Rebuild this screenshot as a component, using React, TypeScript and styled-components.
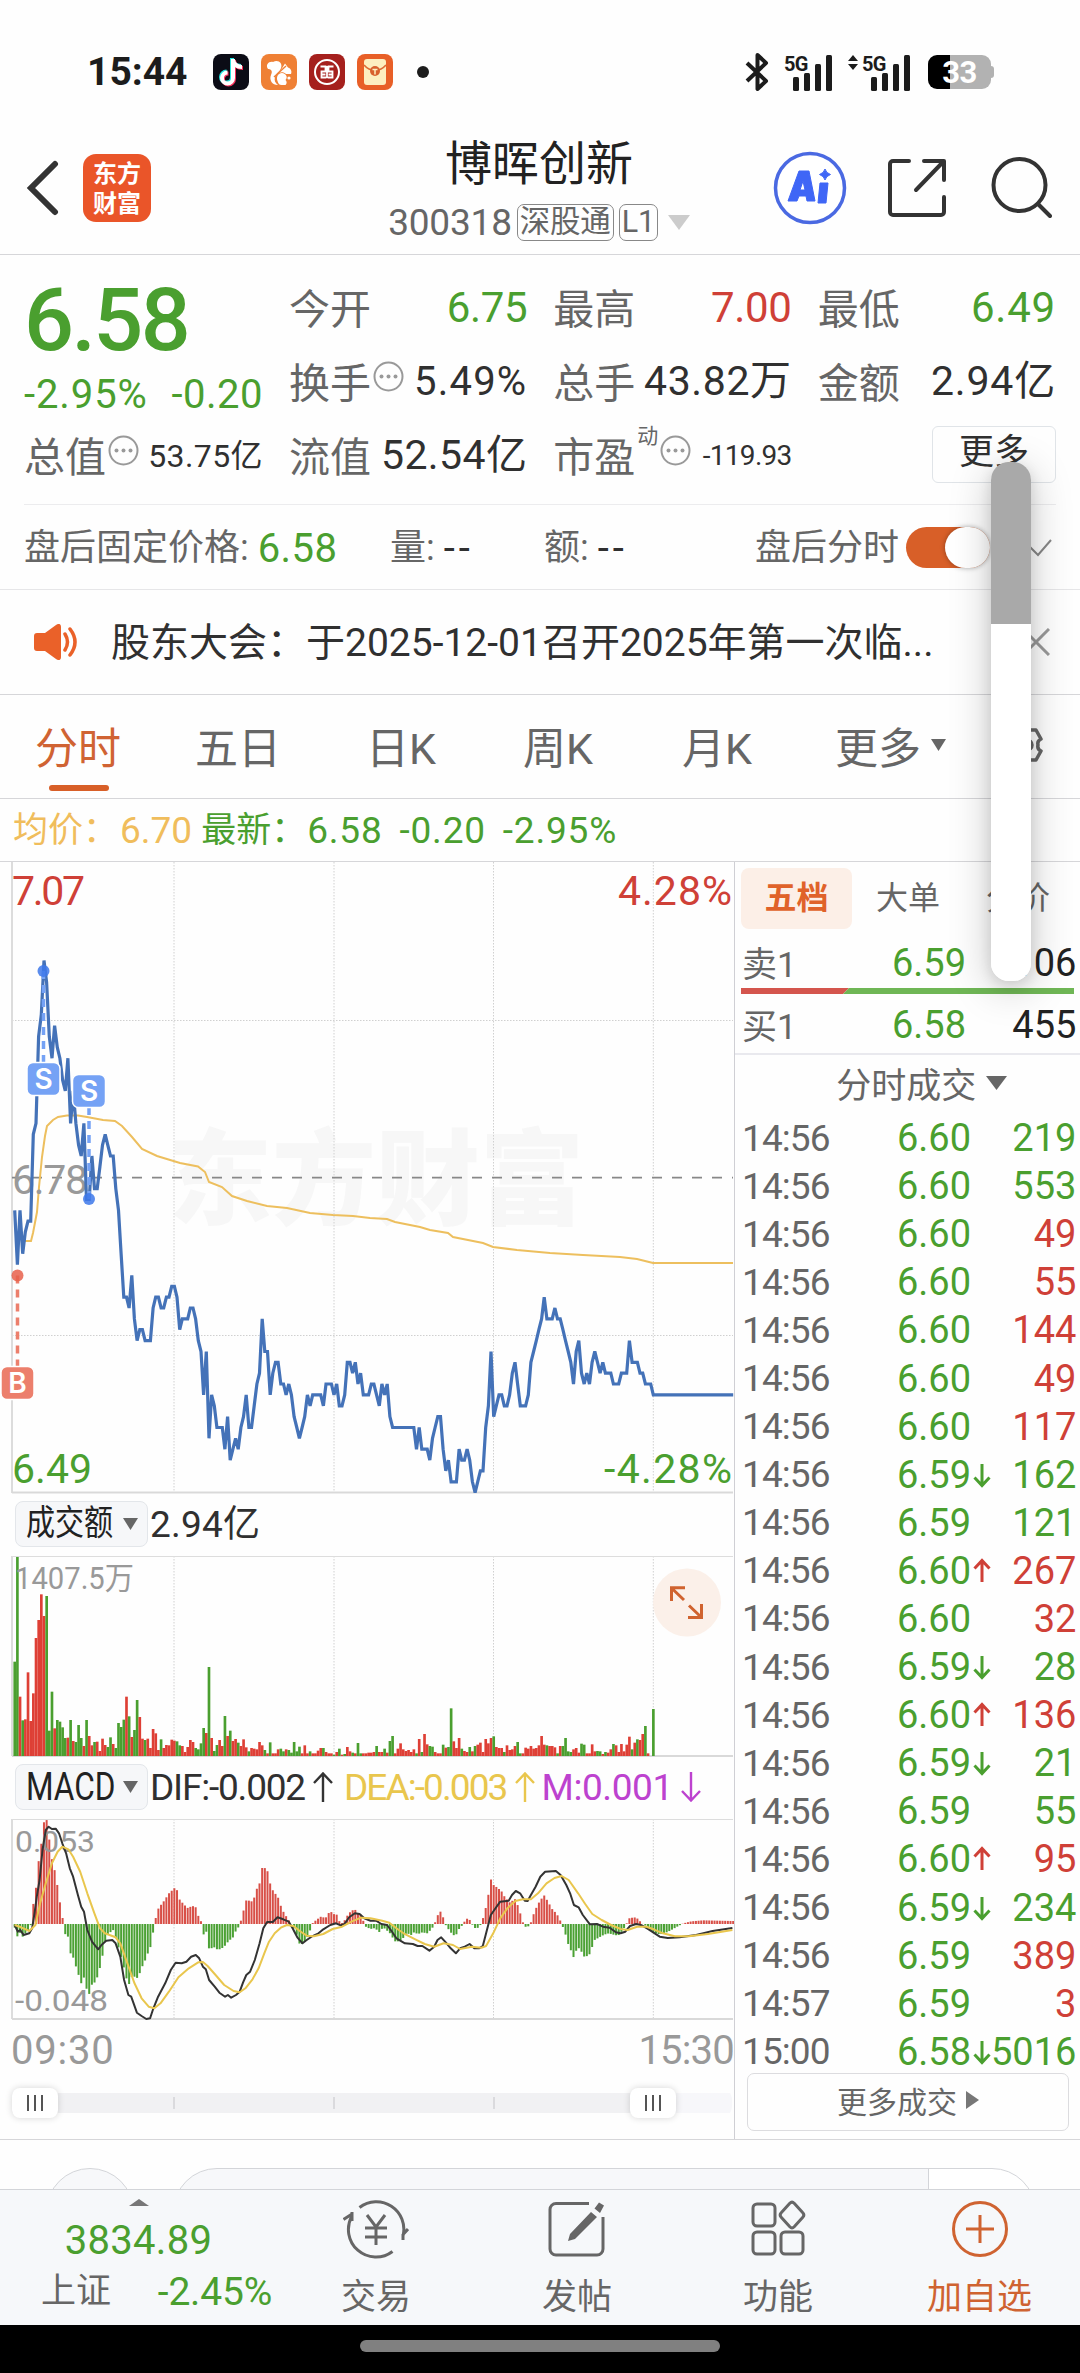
import React from 'react';
import styled, { createGlobalStyle } from 'styled-components';

const C = {
  green: '#4a9f2f',
  red: '#cf4037',
  orange: '#d85f28',
  gray: '#666',
  dark: '#303030',
  light: '#999',
  line: '#d6d6d9',
};
const FONT = `Roboto, "Noto Sans CJK SC", sans-serif`;

const Global = createGlobalStyle`
  * { box-sizing: border-box; }
  body { margin: 0; background: #fff; font-family: ${FONT}; color: ${C.dark}; }
  svg { display: block; flex: none; }
`;

const Screen = styled.div`
  position: relative;
  width: 1080px;
  height: 2373px;
  overflow: hidden;
  background: #fefefe;
  display: flex;
  flex-direction: column;
  white-space: nowrap;
`;

const Text = styled.span<{ $size: number; $color?: string; $ls?: number; $weight?: number }>`
  font-size: ${p => p.$size}px;
  line-height: 1.2;
  color: ${p => p.$color ?? C.dark};
  letter-spacing: ${p => p.$ls ?? 0}px;
  font-weight: ${p => p.$weight ?? 400};
`;

/* ---------- status bar ---------- */
const StatusBar = styled.div`
  height: 122px;
  padding: 22px 86px 0 87px;
  display: flex;
  align-items: center;
  justify-content: space-between;
`;
const StatusLeft = styled.div`
  display: flex;
  align-items: center;
  gap: 12px;
`;
const Clock = styled(Text)`
  width: 114px;
`;
const StatusRight = styled.div`
  display: flex;
  align-items: center;
`;
const Dot = styled.i`
  width: 12px;
  height: 12px;
  border-radius: 50%;
  background: #1c1c1c;
  margin-left: 12px;
`;
const Battery = styled.div`
  width: 63px;
  height: 34px;
  border-radius: 9px;
  background: linear-gradient(90deg, #000 35%, #b2b2b2 35%);
  color: #fff;
  font: 700 31px/35px ${FONT};
  letter-spacing: -0.5px;
  text-align: center;
  margin-left: 17px;
`;
const Nub = styled.i`
  width: 3px;
  height: 12px;
  background: #b2b2b2;
  border-radius: 0 3px 3px 0;
`;
const SignalBox = styled.div`
  display: flex;
  align-items: flex-start;
  height: 38px;
  margin-left: 15px;
`;
const NetType = styled.span`
  width: 24px;
  font-size: 20px;
  font-weight: 700;
  line-height: 22px;
  letter-spacing: -0.8px;
  color: #1c1c1c;
`;
const Bars = styled.svg`
  margin-left: -15px;
`;

const Signal = ({ arrows }: { arrows?: boolean }) => (
  <SignalBox>
    {arrows && <svg width="14" height="20" viewBox="0 0 14 20"><path d="M5 2l5 6H0zM5 17l5-6H0z" fill="#1c1c1c" /></svg>}
    <NetType>5G</NetType>
    <Bars width="40" height="38" viewBox="0 0 40 38" fill="#1c1c1c">
      <rect x="0" y="24" width="6" height="14" rx="1.500" />
      <rect x="11" y="20" width="6" height="18" rx="1.500" />
      <rect x="22" y="11" width="6" height="27" rx="1.500" />
      <rect x="33" y="2" width="6" height="36" rx="1.500" />
    </Bars>
  </SignalBox>
);

const Status = () => (
  <StatusBar>
    <StatusLeft>
      <Clock $size={39} $weight={700} $color="#1c1c1c">15:44</Clock>
      <svg width="36" height="36" viewBox="0 0 36 36">
        <rect width="36" height="36" rx="8" fill="#0b0c16" />
        <g fill="none" strokeWidth="4">
          <path d="M20 5v19a5.500 5.500 0 1 1-5.500-5.500M20 6c1 5 5 7 9 7" stroke="#25e6e0" transform="translate(-1 -1)" />
          <path d="M20 5v19a5.500 5.500 0 1 1-5.500-5.500M20 6c1 5 5 7 9 7" stroke="#f6305a" transform="translate(1 1)" />
          <path d="M20 5v19a5.500 5.500 0 1 1-5.500-5.500M20 6c1 5 5 7 9 7" stroke="#fff" />
        </g>
      </svg>
      <svg width="36" height="36" viewBox="0 0 36 36">
        <rect width="36" height="36" rx="8" fill="#ef8035" />
        <path d="M7 15c-3-4 1-8 5-7c5-3 10 1 8 6c-1 4-5 5-6 9c-1 3 0 6 3 8c-6 0-9-5-7-10c2-4 0-6-3-6z" fill="#fff" />
        <path d="M21 19c-4 0-6 4-4.500 8c1 3 2 4 4 4h4c2-2 1-4 0-5c3-3 0-7-3.500-7z" fill="#fff" />
        <path d="M18 19L24 9.500l3 4c3 1 4 4 3 6.500h-5c-2-2-5-2-7-1z" fill="#fff" />
        <path d="M13 23L25 12" stroke="#ef8035" strokeWidth="1.400" />
        <circle cx="28" cy="24" r="1.600" fill="#fff" />
      </svg>
      <svg width="36" height="36" viewBox="0 0 36 36">
        <rect width="36" height="36" rx="8" fill="#a5201d" />
        <circle cx="18" cy="18" r="12" fill="none" stroke="#fff" strokeWidth="2" />
        <path d="M11.500 12.500h5v5h-4v6h5M24.500 12.500h-5v5h4v6h-5M12 20.500h4.500M24 20.500h-4.500M18 12v12" fill="none" stroke="#fff" strokeWidth="1.800" />
      </svg>
      <svg width="36" height="36" viewBox="0 0 36 36">
        <rect width="36" height="36" rx="8" fill="#e85f27" />
        <rect x="7" y="5" width="22" height="26" rx="3" fill="#fdeec0" />
        <path d="M7 11c6 7 16 7 22 0" fill="none" stroke="#dd6a35" strokeWidth="1.600" />
        <circle cx="18" cy="17" r="5" fill="#d8602d" />
        <path d="M15.500 15.500h5M18 15.500v5" stroke="#fdeec0" strokeWidth="1.500" />
      </svg>
      <Dot />
    </StatusLeft>
    <StatusRight>
      <svg width="24" height="38" viewBox="0 0 24 38" fill="none" stroke="#1c1c1c" strokeWidth="4" strokeLinejoin="round">
        <path d="M2 10l19 18-8.500 8V2l8.500 8L2 28" />
      </svg>
      <Signal />
      <Signal arrows />
      <Battery>33</Battery>
      <Nub />
    </StatusRight>
  </StatusBar>
);

/* ---------- header ---------- */
const HeaderBar = styled.header`
  height: 133px;
  padding: 0 28px 0 26px;
  display: grid;
  grid-template-columns: 1fr auto 1fr;
  border-bottom: 1px solid ${C.line};
`;
const HeaderLeft = styled.div`
  display: flex;
  align-items: center;
  gap: 24px;
`;
const Logo = styled.div`
  width: 68px;
  height: 68px;
  border-radius: 13px;
  background: #ea5529;
  color: #fff;
  font: 700 24px/30px "Noto Sans CJK SC", sans-serif;
  display: flex;
  flex-direction: column;
  align-items: center;
  padding-top: 3px;
`;
const LogoLine = styled.span`
  height: 30px;
`;
const TitleBlock = styled.div`
  display: flex;
  flex-direction: column;
  align-items: center;
  padding-top: 10px;
`;
const Title = styled.div`
  font-size: 47px;
  line-height: 63px;
  color: #222;
`;
const SubTitle = styled.div`
  display: flex;
  align-items: center;
  height: 54px;
  font-size: 37px;
  letter-spacing: -0.2px;
  color: ${C.gray};
`;
const Tag = styled.span`
  height: 37px;
  border: 1.5px solid #888;
  border-radius: 7px;
  font-size: 30.5px;
  line-height: 34px;
  padding: 0 2px;
  margin-left: 5px;
`;
const HeaderRight = styled.div`
  display: flex;
  align-items: center;
  justify-content: flex-end;
`;

const Header = () => (
  <HeaderBar>
    <HeaderLeft>
      <svg width="33" height="56" viewBox="0 0 33 56" fill="none" stroke="#333" strokeWidth="6" strokeLinecap="round">
        <path d="M29 4L5 28L29 52" />
      </svg>
      <Logo><LogoLine>东方</LogoLine><LogoLine>财富</LogoLine></Logo>
    </HeaderLeft>
    <TitleBlock>
      <Title>博晖创新</Title>
      <SubTitle>
        300318<Tag>深股通</Tag><Tag>L1</Tag>
        <svg width="32" height="15" viewBox="0 0 32 15"><path d="M10 0h22L21 15z" fill="#ccc" /></svg>
      </SubTitle>
    </TitleBlock>
    <HeaderRight>
      <svg width="74" height="74" viewBox="0 0 74 74">
        <circle cx="37" cy="37" r="34.500" fill="#fff" stroke="#4a69e2" strokeWidth="3.500" />
        <path fillRule="evenodd" d="M26 20h10l6 30h-8l-1-5h-7l-2 5h-9zM30 30l-3 9h5z" fill="#3f66f6" stroke="#3f66f6" strokeLinejoin="round" />
        <path d="M47 32h8l-2 20h-8zM52 18q1 4 5.500 5.500q-4.500 1.500-5.500 5.500q-1-4-5.500-5.500q4.500-1.500 5.500-5.500z" fill="#3f66f6" stroke="#3f66f6" strokeLinejoin="round" />
      </svg>
      <svg width="62" height="62" viewBox="0 0 62 62" fill="none" stroke="#333" strokeWidth="4" strokeLinecap="round" strokeLinejoin="round" style={{ marginLeft: 39 }}>
        <path d="M23 4H7a3 3 0 0 0-3 3v48a3 3 0 0 0 3 3h48a3 3 0 0 0 3-3V40M38 4h20v19M57 5L30 33" />
      </svg>
      <svg width="62" height="62" viewBox="0 0 62 62" fill="none" stroke="#333" strokeWidth="4" strokeLinecap="round" style={{ marginLeft: 42 }}>
        <circle cx="29.500" cy="28" r="26" />
        <path d="M48 47l12 12" />
      </svg>
    </HeaderRight>
  </HeaderBar>
);

/* ---------- quote ---------- */
const Quote = styled.section`
  padding: 16px 24px 0;
  height: 335px;
  border-bottom: 1px solid #e6e6e8;
`;
const QuoteTop = styled.div`
  display: grid;
  grid-template-columns: 239px 1fr;
  column-gap: 26px;
  height: 234px;
  border-bottom: 1px solid #ececee;
`;
const BigPrice = styled.div`
  height: 95px;
  font-size: 88px;
  line-height: 97px;
  font-weight: 500;
  color: ${C.green};
  letter-spacing: -2.6px;
`;
const Change = styled.div`
  height: 53px;
  padding-top: 4px;
  display: flex;
  align-items: center;
  justify-content: space-between;
`;
const StatGrid = styled.div`
  display: grid;
  grid-template-columns: repeat(3, 1fr);
  grid-auto-rows: 74px;
  column-gap: 26px;
`;
const Stat = styled.div`
  height: 74px;
  display: flex;
  align-items: center;
  justify-content: space-between;
`;
const StatLabel = styled.div`
  display: flex;
  align-items: center;
  font-size: 41px;
  color: ${C.gray};
  gap: 2px;
  padding-bottom: 5px;
`;
const Sup = styled.span`
  font-size: 21px;
  align-self: flex-start;
  margin: -5px 0 0 0;
`;
const MoreBtn = styled.div`
  width: 124px;
  height: 57px;
  margin: 7px 0 0 auto;
  border: 1.5px solid #e0e4e8;
  border-radius: 6px;
  font-size: 35px;
  line-height: 52px;
  text-align: center;
`;
const AfterRow = styled.div`
  display: flex;
  align-items: center;
  height: 85px;
`;
const AfterItem = styled.div<{ $w?: number }>`
  width: ${p => (p.$w ? p.$w + 'px' : 'auto')};
  display: flex;
  align-items: center;
  gap: 9px;
  padding-top: 3px;
`;
const Switch = styled.div`
  width: 84px;
  height: 41px;
  margin-left: 7px;
  border-radius: 21px;
  background: ${C.orange};
  display: flex;
  justify-content: flex-end;
`;
const Knob = styled.i`
  width: 45px;
  height: 41px;
  border-radius: 21px;
  background: #fff;
  box-shadow: 0 0 5px rgba(0, 0, 0, 0.35);
`;

const Info = () => (
  <svg width="31" height="31" viewBox="0 0 31 31" style={{ marginTop: -6 }}>
    <circle cx="15.500" cy="15.500" r="14" fill="none" stroke="#999" strokeWidth="2" />
    {[8.5, 15.5, 22.5].map(x => <circle key={x} cx={x} cy="15.500" r="2" fill="#999" />)}
  </svg>
);

const QuotePanel = () => (
  <Quote>
    <QuoteTop>
      <div>
        <BigPrice>6.58</BigPrice>
        <Change>
          <Text $size={40} $ls={0.9} $color={C.green}>-2.95%</Text>
          <Text $size={40} $ls={0.5} $color={C.green}>-0.20</Text>
        </Change>
        <Stat><StatLabel>总值<Info /></StatLabel><Text $size={32} $ls={0.4}>53.75亿</Text></Stat>
      </div>
      <StatGrid>
        <Stat><StatLabel>今开</StatLabel><Text $size={42} $ls={-0.3} $color={C.green}>6.75</Text></Stat>
        <Stat><StatLabel>最高</StatLabel><Text $size={42} $ls={-0.3} $color={C.red}>7.00</Text></Stat>
        <Stat><StatLabel>最低</StatLabel><Text $size={42} $ls={0.8} $color={C.green}>6.49</Text></Stat>
        <Stat><StatLabel>换手<Info /></StatLabel><Text $size={40} $ls={1.2}>5.49%</Text></Stat>
        <Stat><StatLabel>总手</StatLabel><Text $size={41} $ls={0.6}>43.82万</Text></Stat>
        <Stat><StatLabel>金额</StatLabel><Text $size={41} $ls={0.8}>2.94亿</Text></Stat>
        <Stat><StatLabel>流值</StatLabel><Text $size={41} $ls={0.4}>52.54亿</Text></Stat>
        <Stat><StatLabel>市盈<Sup>动</Sup><Info /></StatLabel><Text $size={28} $ls={-0.7}>-119.93</Text></Stat>
        <MoreBtn>更多</MoreBtn>
      </StatGrid>
    </QuoteTop>
    <AfterRow>
      <AfterItem $w={366}><Text $size={36} $color={C.gray}>盘后固定价格:</Text><Text $size={40} $ls={0.4} $color={C.green}>6.58</Text></AfterItem>
      <AfterItem $w={154}><Text $size={36} $color={C.gray}>量:</Text><Text $size={40} $ls={4}>--</Text></AfterItem>
      <AfterItem $w={211}><Text $size={36} $color={C.gray}>额:</Text><Text $size={40} $ls={4}>--</Text></AfterItem>
      <AfterItem><Text $size={36} $color={C.gray}>盘后分时</Text></AfterItem>
      <Switch><Knob /></Switch>
      <svg width="26" height="18" viewBox="0 0 26 18" fill="none" stroke="#888" strokeWidth="2" style={{ marginLeft: 37 }}>
        <path d="M1 6l10 10L24 1" />
      </svg>
    </AfterRow>
  </Quote>
);

/* ---------- notice + tabs ---------- */
const Notice = styled.div`
  height: 105px;
  padding: 0 30px 0 34px;
  display: flex;
  align-items: center;
  border-bottom: 1px solid ${C.line};
`;
const NoticeText = styled.div`
  flex: 1;
  margin-left: 32px;
  padding-bottom: 6px;
  font-size: 39px;
`;
const Tabs = styled.nav`
  height: 104px;
  padding-left: 35px;
  display: grid;
  grid-template-columns: 160px 171px 157px 159px 153px 168px 1fr;
  border-bottom: 1px solid ${C.line};
`;
const Tab = styled.div<{ $on?: boolean }>`
  position: relative;
  display: flex;
  align-items: center;
  gap: 10px;
  padding-bottom: 4px;
  font-size: 43px;
  color: ${p => (p.$on ? '#d06333' : C.gray)};
  ${p => p.$on && `&::after { content: ''; position: absolute; left: 14px; bottom: 7px; width: 60px; height: 6px; border-radius: 3px; background: ${C.orange}; }`}
`;
const Summary = styled.div`
  height: 63px;
  padding: 2px 0 0 13px;
  display: flex;
  align-items: center;
  border-bottom: 1px solid ${C.line};
`;

const Strip = () => (
  <>
    <Notice>
      <svg width="45" height="36" viewBox="0 0 45 36">
        <path d="M3 9h8l11-8c3-2 5-1 5 2v30c0 3-2 4-5 2l-11-8H3c-2 0-3-1-3-3V12c0-2 1-3 3-3z" fill="#ea6129" />
        <path d="M31 10q5 8 0 16M36 5q10 13 0 26" fill="none" stroke="#ea6129" strokeWidth="3.500" strokeLinecap="round" />
      </svg>
      <NoticeText>股东大会：于2025-12-01召开2025年第一次临...</NoticeText>
      <svg width="28" height="28" viewBox="0 0 28 28" stroke="#999" strokeWidth="3"><path d="M1 1l26 26M27 1L1 27" /></svg>
    </Notice>
    <Tabs>
      <Tab $on>分时</Tab>
      <Tab>五日</Tab>
      <Tab>日K</Tab>
      <Tab>周K</Tab>
      <Tab>月K</Tab>
      <Tab>更多<svg width="15" height="12" viewBox="0 0 15 12"><path d="M0 0h15L7.500 12z" fill="#666" /></svg></Tab>
      <Tab>
        <svg width="42" height="42" viewBox="0 0 42 42" fill="none" stroke="#666" strokeWidth="3.500" strokeLinejoin="round">
          <path d="M18 6q3 3 6 0h6l5 9q-4 2-3 6q-1 4 3 6l-5 9h-6q-3-3-6 0h-6l-5-9q4-2 3-6q1-4-3-6l5-9z" transform="translate(3 0)" />
          <circle cx="24" cy="21" r="5" />
        </svg>
      </Tab>
    </Tabs>
    <Summary>
      <Text $size={35} $color="#f0bd5c">均价：</Text>
      <Text $size={37} $color="#f0bd5c" style={{ marginLeft: 2, marginRight: 9 }}>6.70</Text>
      <Text $size={35} $color={C.green}>最新：</Text>
      <Text $size={37} $color={C.green} $ls={0.8} style={{ wordSpacing: 7, marginLeft: 1 }}>6.58 -0.20 -2.95%</Text>
    </Summary>
  </>
);

/* ---------- chart data ---------- */
const STEP = 2.661;
const X0 = 14.7;
const xAt = (minute: number) => X0 + minute * STEP;

/* [minute, price in cents] */
const PRICE: number[][] = [
  [0,675],[1,670],[2,675],[3,671],[4,673],[5,674],[6,674],[7,682],[8,683],[9,691],[10,693],[11,698],[12,696],[13,691],[14,689],[15,692],[16,690],[17,689],[18,687],[19,686],[20,689],[21,683],[22,686],[23,683],[24,681],[25,680],[26,683],[27,676],[28,676],[29,680],[30,677],[31,677],[32,679],[33,681],[34,682],[35,681],[36,680],[37,680],[38,677],[39,675],[40,671],[41,667],[42,667],[43,666],[44,669],[45,665],[46,663],[47,664],[48,664],[49,663],[51,663],[52,666],[53,667],[54,667],[55,666],[56,666],[57,667],[58,667],[59,668],[60,668],[61,667],[62,664],[63,665],[65,665],[66,666],[67,666],[68,665],[69,663],[70,662],[71,658],[72,662],[73,654],[74,658],[75,657],[76,655],[78,655],[79,653],[80,656],[81,652],[82,653],[83,654],[84,653],[85,655],[86,656],[87,658],[88,655],[89,655],[90,657],[91,659],[92,660],[93,665],[94,662],[95,662],[96,658],[97,660],[98,661],[99,661],[100,659],[101,659],[102,658],[103,659],[104,658],[105,656],[106,655],[107,654],[108,655],[109,656],[110,658],[111,657],[112,658],[115,658],[116,657],[117,659],[119,659],[120,658],[121,659],[122,657],[123,657],[124,658],[125,661],[126,661],[127,660],[128,661],[129,659],[130,660],[131,658],[133,658],[134,659],[135,659],[137,657],[138,659],[139,658],[140,659],[141,656],[142,655],[150,655],[151,653],[152,655],[153,653],[155,653],[156,652],[157,654],[158,655],[159,656],[160,656],[161,653],[162,651],[163,652],[164,650],[166,650],[167,653],[168,652],[169,652],[170,653],[171,652],[172,650],[173,649],[174,650],[175,651],[176,651],[177,655],[178,657],[179,662],[180,656],[181,657],[182,658],[183,658],[184,657],[185,657],[186,658],[187,660],[188,661],[189,659],[190,657],[192,657],[193,658],[194,661],[195,662],[196,663],[197,664],[198,665],[199,667],[200,665],[202,665],[203,666],[204,665],[205,665],[206,664],[207,663],[208,662],[209,661],[210,659],[211,662],[212,663],[213,660],[214,659],[215,660],[216,659],[217,661],[218,662],[219,661],[220,660],[221,661],[222,660],[224,660],[225,659],[227,659],[228,660],[230,660],[231,663],[232,661],[234,661],[235,660],[236,660],[237,659],[239,659],[240,658],[270,658],
];
const priceY = (cents: number) => 315.7 + (678 - cents) * 10.86;
const pricePath = PRICE.map(([m, c]) => `${xAt(m).toFixed(1)},${priceY(c).toFixed(1)}`).join(' ');

const AVG = '25,379 31,379 33,371 37,350 39,325 42,295 45,274 47,264 53,258 58,255 67,253.6 78,253.6 87,255 103,258 115,259 122,264 132,275 142,287 157,294 180,301 198,304.5 205,310 209,320 222,325 232,334 247,339 267,344 287,346 310,351 333,353 353,354 370,356 387,357 395,360 420,365 430,368 448,371 453,375 483,381 493,385 517,388 550,391 583,393 620,395 637,397 653,401 733,401';

const VOLUME = (
  'g283 g597 r178 g107 r110 r251 r105 r188 r354 r408 r485 r420 g480 g76 g193 r83 g108 g103 g86 g54 r55 g108 r45 g42 g93 g54 r30 g108 r60 r32 g42 r43 r15 r52 r33 g27 g56 r36 g24 g99 g87 g109 r178 g119 r57 g78 g168 r117 r52 g48 r52 r24 r81 r68 r18 g50 r24 r33 r32 r49 r46 g44 g32 r30 r12 r27 r48 r42 g24 g20 g38 g84 r69 g267 r54 g15 g33 r48 r30 g120 r60 g76 r45 r51 g40 r30 r50 r26 g14 r24 r22 r20 r42 r32 g18 r8 g41 r8 r8 r20 g22 g14 r20 g18 g10 g42 g14 g28 r8 r32 r8 g14 r8 r8 r16 r24 g24 r12 r8 r8 g4 r12 g22 r4 g6 r27 r14 g10 r8 g39 g8 r8 r8 r10 ' +
  'r10 r12 g30 r12 r12 g22 r10 g45 g60 r8 r22 r38 r20 r15 r18 r12 r20 g8 r51 g12 r66 r35 g30 g28 r12 r8 r8 g34 r25 g27 g143 r44 r24 r54 g22 r15 r12 g27 r14 g30 r34 r40 r12 r51 r38 r54 g59 r27 r24 r24 g12 r32 r18 r20 r30 g42 g8 r8 r25 r22 r30 r22 r24 r32 r60 r34 g32 r30 r30 r26 g8 r30 g30 g54 g14 g12 r20 r24 r10 g37 g34 r8 r8 r35 r14 g15 g14 r6 g12 r10 r20 g36 r32 r12 r36 r14 r34 r58 g20 r40 g50 r48 r66 g90 r8 g0 g141'
).split(' ').map(s => ({ up: s[0] === 'r', h: Number(s.slice(1)) / 3 }));

/* MACD series, horizontal units of 1/2.119 px and vertical units of 1/3 px */
const mx = (v: number) => v / 2.119;
const my = (v: number) => (v - 54) / 3;
const parse = (s: string) => s.split(' ').map(p => p.split(',').map(Number));
const HIST = parse(
  '31,-10 37,-38 43,-25 48,-38 54,-28 60,-20 66,0 70,55 76,105 82,190 88,245 93,305 99,312 104,258 110,195 116,160 122,112 127,65 133,15 138,-30 144,-38 150,-92 155,-100 161,-128 167,-155 172,-178 178,-160 184,-198 190,-212 195,-180 201,-175 206,-160 212,-130 218,-90 223,-50 229,-30 240,-18 246,-45 252,-75 258,-105 264,-140 270,-175 275,-182 280,-155 291,-162 297,-145 303,-122 308,-108 314,-85 320,-65 325,-20 330,18 336,48 348,70 358,92 370,108 375,102 381,72 397,48 408,54 415,50 420,25 426,8 431,-32 437,-22 443,-75 454,-70 462,-78 474,-70 485,-50 493,-42 500,-20 505,-10 511,12 516,40 522,72 533,68 539,80 544,105 550,122 555,168 561,168 567,158 573,118 580,95 588,85 594,58 600,38 610,15 620,-5 628,-25 632,-58 640,-60 648,-50 655,-28 662,2 670,12 680,22 690,18 697,34 703,36 709,28 714,28 720,5 726,2 732,15 738,30 745,40 752,44 758,32 765,28 771,5 775,-8 785,-15 795,-12 803,-25 812,-10 822,-22 828,-30 836,-52 846,-52 853,-45 862,-25 870,-35 876,-25 886,-30 895,-25 905,-28 915,-15 922,5 927,25 933,38 939,20 945,-5 955,-25 965,-38 971,-18 980,-3 987,14 993,18 999,3 1005,-12 1012,-12 1020,0 1028,40 1034,80 1040,135 1045,118 1051,112 1062,100 1070,80 1080,65 1092,75 1100,45 1107,8 1113,-8 1118,-10 1125,5 1132,35 1140,60 1147,75 1153,86 1160,70 1170,45 1180,30 1188,8 1193,-10 1198,-30 1204,-60 1210,-80 1215,-100 1221,-80 1227,-72 1233,-85 1238,-98 1248,-95 1254,-72 1260,-48 1270,-40 1280,-32 1290,-28 1300,-32 1310,-35 1320,-18 1328,2 1334,18 1348,20 1355,10 1362,0 1368,-5 1380,-22 1395,-30 1405,-30 1420,-20 1435,-8 1448,2 1465,8 1490,11 1520,10 1552,9',
);
const histAt = (v: number) => {
  const i = HIST.findIndex(p => p[0] >= v);
  if (i <= 0) return HIST[i < 0 ? HIST.length - 1 : 0][1];
  const [a, b] = [HIST[i - 1], HIST[i]];
  return a[1] + ((b[1] - a[1]) * (v - a[0])) / (b[0] - a[0]);
};
const DIF = parse('31,375 38,395 43,390 50,405 62,400 68,385 73,340 78,290 84,240 90,150 97,90 103,80 110,87 118,86 125,100 132,130 140,160 148,205 155,230 165,285 172,320 178,335 185,390 195,425 208,448 215,435 225,422 238,420 245,430 255,470 263,540 272,585 278,590 290,638 300,648 310,657 318,655 325,625 335,590 350,550 362,510 372,488 385,490 395,485 405,470 415,465 422,475 430,500 436,508 443,540 455,560 465,578 477,590 483,585 490,593 500,585 508,575 515,548 522,525 530,515 540,480 550,430 558,385 566,366 578,366 588,352 600,358 612,365 620,385 630,412 641,430 650,420 660,410 675,400 685,388 700,375 712,370 722,376 730,372 740,352 752,340 762,342 772,355 785,362 797,362 808,372 820,375 828,390 840,415 858,430 875,432 885,438 895,438 910,452 920,440 927,420 935,412 945,428 955,445 966,460 975,445 985,440 995,432 1005,445 1015,445 1023,438 1030,400 1040,345 1050,325 1060,305 1078,302 1085,285 1093,273 1102,280 1112,302 1118,303 1125,285 1135,260 1145,230 1155,215 1178,213 1188,225 1200,255 1208,280 1216,315 1226,322 1235,345 1250,373 1265,372 1278,380 1292,383 1305,397 1315,400 1325,395 1335,378 1348,372 1360,376 1372,386 1385,398 1398,410 1415,414 1440,412 1475,405 1510,393 1552,384');
const DEA = parse('31,375 45,382 62,393 75,375 85,310 97,250 110,190 122,155 132,140 145,148 155,170 170,215 185,280 200,340 212,385 222,400 245,412 255,430 270,490 285,550 300,595 315,620 327,625 340,610 358,575 378,532 400,505 420,487 430,486 440,498 455,522 475,555 495,573 508,577 520,565 535,538 548,505 560,460 570,425 582,400 595,383 608,375 622,378 635,393 650,407 665,409 685,402 705,387 725,380 745,365 765,353 785,355 810,362 825,368 840,385 855,400 880,418 900,432 920,440 940,430 960,435 975,447 1000,440 1020,443 1030,438 1045,400 1060,355 1075,325 1092,303 1108,298 1125,298 1140,280 1158,250 1175,234 1190,228 1205,240 1225,280 1240,312 1255,342 1275,360 1295,375 1315,387 1330,390 1350,380 1370,380 1385,388 1405,400 1430,409 1460,409 1500,402 1552,390');
const macdLine = (pts: number[][]) => pts.map(([x, y]) => `${mx(x).toFixed(1)},${my(y).toFixed(1)}`).join(' ');

/* ---------- charts ---------- */
const Body = styled.main`
  display: flex;
  height: 1278px;
  border-bottom: 1px solid ${C.line};
`;
const ChartCol = styled.div`
  width: 735px;
  border-right: 1px solid #cfcfd4;
`;
const AXIS_X = [174, 334, 493.5, 653.3];

const Grid = ({ top, bottom, rows = [] }: { top: number; bottom: number; rows?: number[] }) => (
  <g stroke="#d0d0d0" strokeWidth="1">
    {AXIS_X.map(x => <path key={x} d={`M${x} ${top}V${bottom}`} strokeDasharray="1.500 1.500" />)}
    {rows.map(y => <path key={y} d={`M12 ${y}H733`} strokeDasharray="1.500 1.500" />)}
    <path d={`M12 ${top}V${bottom}`} strokeWidth="2" stroke="#dcdcdc" />
  </g>
);

const Marker = ({ x, y, dot, label, color, stroke }: { x: number; y: number; dot: number; label: string; color: string; stroke: string }) => (
  <g>
    <path d={`M${x} ${dot}V${dot < y ? y : y + 32}`} stroke={color} strokeWidth="3.500" strokeDasharray="8 6" />
    <circle cx={x} cy={dot} r="6" fill={stroke} opacity=".85" />
    <rect x={x - 16.5} y={y} width="33" height="33" rx="6" fill={color} stroke="#fff" strokeWidth="1.500" />
    <text x={x} y={y + 26.5} textAnchor="middle" fontFamily="Inter" fontWeight="600" fontSize="28" fill="#fff">{label}</text>
  </g>
);

const PriceChart = () => (
  <svg width="734" height="632" viewBox="0 0 734 632" fontFamily="Roboto" fontSize="41">
    <text x="168" y="355" fontFamily="Noto Sans CJK SC" fontWeight="900" fontSize="104" fill="#f7f7f7">东方财富</text>
    <Grid top={0} bottom={631} rows={[158.5, 473.5]} />
    <path d="M12 630.500H733" stroke="#d9d9d9" strokeWidth="2" />
    <path d="M12 315.700H733" stroke="#888" strokeWidth="1.800" strokeDasharray="10 10" />
    <polyline points={AVG} fill="none" stroke="#edbf5e" strokeWidth="2" />
    <text x="12" y="43" fill={C.red} textLength="73">7.07</text>
    <text x="732" y="43" fill={C.red} textAnchor="end" textLength="114">4.28%</text>
    <text x="12" y="332" fill="#999" textLength="76">6.78</text>
    <text x="12" y="621" fill={C.green} textLength="80">6.49</text>
    <text x="732" y="621" fill={C.green} textAnchor="end" textLength="128">-4.28%</text>
    <polyline points={pricePath} fill="none" stroke="#4472b8" strokeWidth="3.200" strokeLinejoin="miter" />
    <Marker x={43.5} y={200.5} dot={109} label="S" color="#75a2f5" stroke="#3d78ea" />
    <Marker x={89} y={212.5} dot={337} label="S" color="#75a2f5" stroke="#3d78ea" />
    <Marker x={17.5} y={504.5} dot={413.5} label="B" color="#ec7f6c" stroke="#e8604b" />
  </svg>
);

const VolumeChart = () => (
  <svg width="734" height="202" viewBox="0 0 734 202">
    <Grid top={0} bottom={200} />
    <path d="M12 .5H733" stroke="#ddd" />
    <path d="M12 200H733" stroke="#d9d9d9" strokeWidth="2" />
    {VOLUME.map((b, i) => (
      <rect key={i} x={xAt(i) - 1.3} y={200 - b.h} width="2.660" height={b.h} fill={b.up ? '#de3f35' : '#4a9f2f'} />
    ))}
    <text x="15" y="33" fontFamily="Roboto, Noto Sans CJK SC" fontSize="31" fill="#999" textLength="119" lengthAdjust="spacingAndGlyphs">1407.5万</text>
    <circle cx="687" cy="46.500" r="34" fill="#fbefe8" opacity=".95" />
    <path d="M671.500 45V31.700H685M672 32.500l12 11.500M701.500 48V61.500H688M701 61l-12-11.500" fill="none" stroke="#d0632f" strokeWidth="3" />
  </svg>
);

const MacdChart = () => (
  <svg width="734" height="202" viewBox="0 0 734 202" fontFamily="Roboto" fontSize="30">
    <Grid top={1} bottom={201} />
    <path d="M12 1.500H733" stroke="#ddd" />
    <path d="M12 201H733" stroke="#d9d9d9" strokeWidth="2" />
    {Array.from({ length: 271 }, (_, i) => {
      const h = histAt(xAt(i) * 2.119) / 3;
      return <rect key={i} x={xAt(i) - 1} y={h > 0 ? 106 - h : 106} width="2" height={Math.abs(h)} fill={h > 0 ? '#d84f47' : '#4ba134'} />;
    })}
    <text x="15" y="34" fill="#999" textLength="80" lengthAdjust="spacingAndGlyphs">0.053</text>
    <text x="15" y="193" fill="#999" textLength="93" lengthAdjust="spacingAndGlyphs">-0.048</text>
    <polyline points={macdLine(DIF)} fill="none" stroke="#333" strokeWidth="2" strokeLinejoin="round" />
    <polyline points={macdLine(DEA)} fill="none" stroke="#e9c64d" strokeWidth="2" strokeLinejoin="round" />
  </svg>
);

const IndicatorRow = styled.div<{ $h: number; $pt: number }>`
  height: ${p => p.$h}px;
  padding: ${p => p.$pt}px 0 0 15px;
  display: flex;
  align-items: flex-start;
`;
const IndicatorPick = styled.div`
  width: 133px;
  height: 46px;
  padding: 0 9px 0 10px;
  border: 1px solid #e3e6ea;
  border-radius: 8px;
  background: #f6f7f9;
  display: flex;
  align-items: center;
  justify-content: space-between;
`;
const PickName = styled.span<{ $sx: number; $size: number }>`
  width: 88px;
  font-size: ${p => p.$size}px;
  line-height: 44px;
  color: #222;
  transform: scaleX(${p => p.$sx});
  transform-origin: left center;
`;
const IndicatorText = styled(Text)`
  line-height: 47px;
`;
const Caret = ({ w = 15, h = 12 }: { w?: number; h?: number }) => (
  <svg width={w} height={h} viewBox="0 0 15 12" preserveAspectRatio="none"><path d="M0 0h15L7.500 12z" fill="#666" /></svg>
);
const ArrowGlyph = ({ down, color }: { down?: boolean; color: string }) => (
  <svg width="20" height="30" viewBox="0 0 20 30" fill="none" stroke={color} strokeWidth="2.400" style={{ margin: '8px 0 0 8px' }}>
    <path d={down ? 'M10 0v28M1 19l9 9.500 9-9.500' : 'M10 30V2M1 11l9-9.500 9 9.500'} />
  </svg>
);
const TimeAxis = styled.div`
  height: 60px;
  padding: 2px 0 0 11px;
  display: flex;
  align-items: center;
  justify-content: space-between;
`;
const SliderRow = styled.div`
  height: 59px;
  padding: 8px 2px 0 12px;
`;
const Track = styled.div`
  height: 30px;
  display: flex;
  align-items: center;
  background: linear-gradient(#f1f1f3, #f1f1f3) left center / 640px 20px no-repeat, linear-gradient(#f7f7fa, #f7f7fa) right center / 81px 20px no-repeat;
  border-radius: 0 12px 12px 0;
`;
const Thumb = styled.div`
  width: 46px;
  height: 30px;
  border-radius: 8px;
  background: #fff;
  box-shadow: 0 0 7px rgba(0, 0, 0, 0.16);
  display: flex;
  align-items: center;
  justify-content: center;
  gap: 5px;
`;
const Grip = styled.i`
  width: 2px;
  height: 16px;
  background: #555;
`;
const Ticks = styled.div`
  width: 572px;
  height: 12px;
  display: flex;
  padding-left: 115px;
  gap: 158px;
`;
const Tick = styled.i`
  width: 2px;
  background: #dadadd;
`;

const Charts = () => (
  <ChartCol>
    <PriceChart />
    <IndicatorRow $h={62} $pt={7}>
      <IndicatorPick><PickName $size={35} $sx={0.83}>成交额</PickName><Caret /></IndicatorPick>
      <IndicatorText $size={37} $ls={0.2} style={{ marginLeft: 2 }}>2.94亿</IndicatorText>
    </IndicatorRow>
    <VolumeChart />
    <IndicatorRow $h={60} $pt={6}>
      <IndicatorPick><PickName $size={38} $sx={0.83}>MACD</PickName><Caret /></IndicatorPick>
      <IndicatorText $size={37} $ls={-1.2} style={{ marginLeft: 2 }}>DIF:-0.002</IndicatorText>
      <ArrowGlyph color="#333" />
      <IndicatorText $size={37} $ls={-1.9} $color="#e9c64d" style={{ marginLeft: 11 }}>DEA:-0.003</IndicatorText>
      <ArrowGlyph color="#e9c64d" />
      <IndicatorText $size={37} $ls={-0.4} $color="#bd42cf" style={{ marginLeft: 7 }}>M:0.001</IndicatorText>
      <ArrowGlyph down color="#bd42cf" />
    </IndicatorRow>
    <MacdChart />
    <TimeAxis>
      <Text $size={40} $ls={0.8} $color={C.light}>09:30</Text>
      <Text $size={40} $color={C.light} $ls={-0.8}>15:30</Text>
    </TimeAxis>
    <SliderRow>
      <Track>
        <Thumb><Grip /><Grip /><Grip /></Thumb>
        <Ticks><Tick /><Tick /><Tick /></Ticks>
        <Thumb><Grip /><Grip /><Grip /></Thumb>
      </Track>
    </SliderRow>
  </ChartCol>
);

/* ---------- order book ---------- */
const Book = styled.aside`
  flex: 1;
  display: flex;
  flex-direction: column;
`;
const BookTabs = styled.div`
  display: grid;
  grid-template-columns: 111px 109px 1fr;
  margin: 6px 6px 0;
  height: 60px;
  line-height: 61px;
  font-size: 32px;
  color: ${C.gray};
`;
const BookTab = styled.span<{ $on?: boolean }>`
  ${p => (p.$on
    ? `background: #fcefe7; border-radius: 8px; color: #e0622a; font-weight: 700; text-align: center;`
    : `padding-left: 24px;`)}
`;
const QuoteRow = styled.div<{ $h: number; $priceW?: number; $pt?: number }>`
  height: ${p => p.$h}px;
  padding: ${p => p.$pt ?? 0}px 7px 0 7px;
  display: grid;
  grid-template-columns: 86px ${p => p.$priceW ?? 143}px 20px 1fr;
  align-items: center;
  font-size: 38px;
`;
const Side = styled.span`
  font-size: 35px;
  color: ${C.gray};
  padding-bottom: 3px;
`;
const Time = styled.span`
  font-size: 37px;
  letter-spacing: -0.9px;
  color: ${C.gray};
`;
const Price = styled.span`
  text-align: right;
  color: ${C.green};
`;
const Vol = styled.span<{ $color?: string }>`
  text-align: right;
  color: ${p => p.$color ?? '#222'};
`;
const TradeHead = styled.div`
  height: 61px;
  border-top: 2px solid #e9e9ee;
  padding: 0 0 4px 25px;
  display: flex;
  align-items: center;
  justify-content: center;
  gap: 10px;
  font-size: 35px;
  color: ${C.gray};
`;
const MoreTrades = styled.div`
  width: 322px;
  height: 58px;
  margin: -3px 0 0 12px;
  padding-bottom: 3px;
  border: 1.5px solid #dcdcdf;
  border-radius: 7px;
  display: flex;
  align-items: center;
  justify-content: center;
  gap: 9px;
  font-size: 30px;
  color: ${C.gray};
`;

/* time, price, direction, volume, volume colour */
const TRADES = (
  '14:56|6.60||219|g;14:56|6.60||553|g;14:56|6.60||49|r;14:56|6.60||55|r;14:56|6.60||144|r;14:56|6.60||49|r;14:56|6.60||117|r;14:56|6.59|d|162|g;14:56|6.59||121|g;14:56|6.60|u|267|r;' +
  '14:56|6.60||32|r;14:56|6.59|d|28|g;14:56|6.60|u|136|r;14:56|6.59|d|21|g;14:56|6.59||55|g;14:56|6.60|u|95|r;14:56|6.59|d|234|g;14:56|6.59||389|r;14:57|6.59||3|r;15:00|6.58|d|5016|g'
).split(';').map(r => r.split('|'));

const OrderBook = () => (
  <Book>
    <BookTabs>
      <BookTab $on>五档</BookTab>
      <BookTab>大单</BookTab>
      <BookTab style={{ paddingLeft: 25 }}>分价</BookTab>
    </BookTabs>
    <QuoteRow $h={60} $priceW={138} $pt={8}><Side>卖1</Side><Price>6.59</Price><i /><Vol>106</Vol></QuoteRow>
    <svg width="345" height="6" viewBox="0 0 345 6">
      <path d="M6 0H114L108 6H6z" fill="#d4554d" />
      <path d="M114 0H339V6H108z" fill="#6fb655" />
    </svg>
    <QuoteRow $h={59} $priceW={138} $pt={3}><Side>买1</Side><Price>6.58</Price><i /><Vol>455</Vol></QuoteRow>
    <TradeHead>分时成交<Caret w={21} h={14} /></TradeHead>
    {TRADES.map(([t, p, dir, v, c], i) => (
      <QuoteRow key={i} $h={48.1}>
        <Time>{t}</Time>
        <Price>{p}</Price>
        {dir ? (
          <svg width="20" height="26" viewBox="0 0 20 26" fill="none" stroke={dir === 'd' ? C.green : C.red} strokeWidth="3">
            <path d={dir === 'd' ? 'M11 2v21M3.500 15.500l7.500 8 7.500-8' : 'M11 24V3M3.500 10.500l7.500-8 7.500 8'} />
          </svg>
        ) : <i />}
        <Vol $color={c === 'g' ? C.green : C.red}>{v}</Vol>
      </QuoteRow>
    ))}
    <MoreTrades>更多成交<svg width="13" height="18" viewBox="0 0 13 18"><path d="M0 0v18l13-9z" fill="#777" /></svg></MoreTrades>
  </Book>
);

/* ---------- bottom ---------- */
const Peek = styled.div`
  height: 49px;
  padding: 28px 44px 0 46px;
  display: flex;
  gap: 39px;
  overflow: hidden;
`;
const PeekCircle = styled.div`
  flex: none;
  width: 88px;
  height: 88px;
  border-radius: 50%;
  border: 1.5px solid #d3d5d9;
  background: #f7f8fa;
`;
const PeekPill = styled.div`
  flex: 1;
  height: 88px;
  border-radius: 44px;
  border: 1.5px solid #d3d5d9;
  background: linear-gradient(90deg, #f7f8fa 754px, #d3d5d9 754px, #d3d5d9 755.5px, #fff 755.5px);
`;
const Nav = styled.footer`
  height: 136px;
  border-top: 1px solid #d3d5d9;
  background: #f6f8fa;
  display: grid;
  grid-template-columns: 275px 202px 200px 202px 201px;
`;
const IndexBox = styled.div`
  display: flex;
  flex-direction: column;
  align-items: center;
  padding: 9px 0 0 2px;
`;
const IndexValue = styled(Text)`
  height: 63px;
  line-height: 70px;
`;
const IndexRow = styled.div`
  width: 231px;
  margin-left: 36px;
  display: flex;
  justify-content: space-between;
  align-items: center;
  height: 46px;
`;
const NavItem = styled.div<{ $on?: boolean }>`
  display: flex;
  flex-direction: column;
  align-items: center;
  padding-top: 8px;
  gap: 6px;
  font-size: 35px;
  line-height: 64px;
  color: ${p => (p.$on ? '#cf6331' : C.gray)};
`;
const HomeBar = styled.div`
  height: 48px;
  background: #000;
  display: flex;
  justify-content: center;
  padding-top: 15px;
`;
const HomePill = styled.i`
  width: 360px;
  height: 12px;
  border-radius: 6px;
  background: #808080;
`;

const Bottom = () => (
  <>
    <Peek><PeekCircle /><PeekPill /></Peek>
    <Nav>
      <IndexBox>
        <svg width="20" height="7" viewBox="0 0 20 7"><path d="M10 0l10 7H0z" fill="#777" /></svg>
        <IndexValue $size={40} $ls={0.3} $color={C.green}>3834.89</IndexValue>
        <IndexRow><Text $size={35} $color={C.gray}>上证</Text><Text $size={39} $color={C.green} $ls={-0.2}>-2.45%</Text></IndexRow>
      </IndexBox>
      <NavItem>
        <svg width="66" height="62" viewBox="0 0 66 62" fill="none" stroke="#666" strokeWidth="3">
          <path d="M16.500 9.500A27.500 27.500 0 0 1 60 38M60.500 36l4.500-5M60 42v-6M49.500 53.500A27.500 27.500 0 0 1 9 18M9 16l-8.500 5.500M9 14v9" />
          <path d="M24 17l9 12 9-12M22 30h22M22 39h22M33 29v18" />
        </svg>
        交易
      </NavItem>
      <NavItem>
        <svg width="62" height="62" viewBox="0 0 62 62" fill="none" stroke="#666" strokeWidth="3">
          <path d="M43 5.500H10a6 6 0 0 0-6 6V51a6 6 0 0 0 6 6H51a6 6 0 0 0 6-6V19" />
          <path d="M45 14l6 5L29 41l-7 2 2-7zM48.500 10.500l4.500-6 5 3-4 7.500z" fill="#666" stroke="none" />
        </svg>
        发帖
      </NavItem>
      <NavItem>
        <svg width="62" height="62" viewBox="0 0 62 62" fill="none" stroke="#666" strokeWidth="3">
          <rect x="6" y="6" width="22" height="22" rx="4" />
          <rect x="6" y="34" width="22" height="22" rx="4" />
          <rect x="34" y="34" width="22" height="22" rx="4" />
          <path d="M42.800 5.200q2.200-2.200 4.400 0l8.600 9.600q2.200 2.200 0 4.400l-8.600 9.600q-2.200 2.200-4.400 0l-8.600-9.600q-2.200-2.200 0-4.400z" />
        </svg>
        功能
      </NavItem>
      <NavItem $on>
        <svg width="62" height="62" viewBox="0 0 62 62" fill="none" stroke="#cf6331" strokeWidth="3">
          <circle cx="31" cy="31" r="26.500" />
          <path d="M31 17v28M17 31h28" />
        </svg>
        加自选
      </NavItem>
    </Nav>
    <HomeBar><HomePill /></HomeBar>
  </>
);

const VolumeOverlay = styled.div`
  position: absolute;
  left: 991px;
  top: 462px;
  width: 40px;
  height: 519px;
  border-radius: 18px;
  background: linear-gradient(#a9a9a9 162px, #fff 162px);
  box-shadow: 0 8px 42px rgba(0, 0, 0, 0.22), 0 4px 14px rgba(0, 0, 0, 0.12);
`;

export default function App() {
  return (
    <Screen>
      <Global />
      <Status />
      <Header />
      <QuotePanel />
      <Strip />
      <Body>
        <Charts />
        <OrderBook />
      </Body>
      <Bottom />
      <VolumeOverlay />
    </Screen>
  );
}
